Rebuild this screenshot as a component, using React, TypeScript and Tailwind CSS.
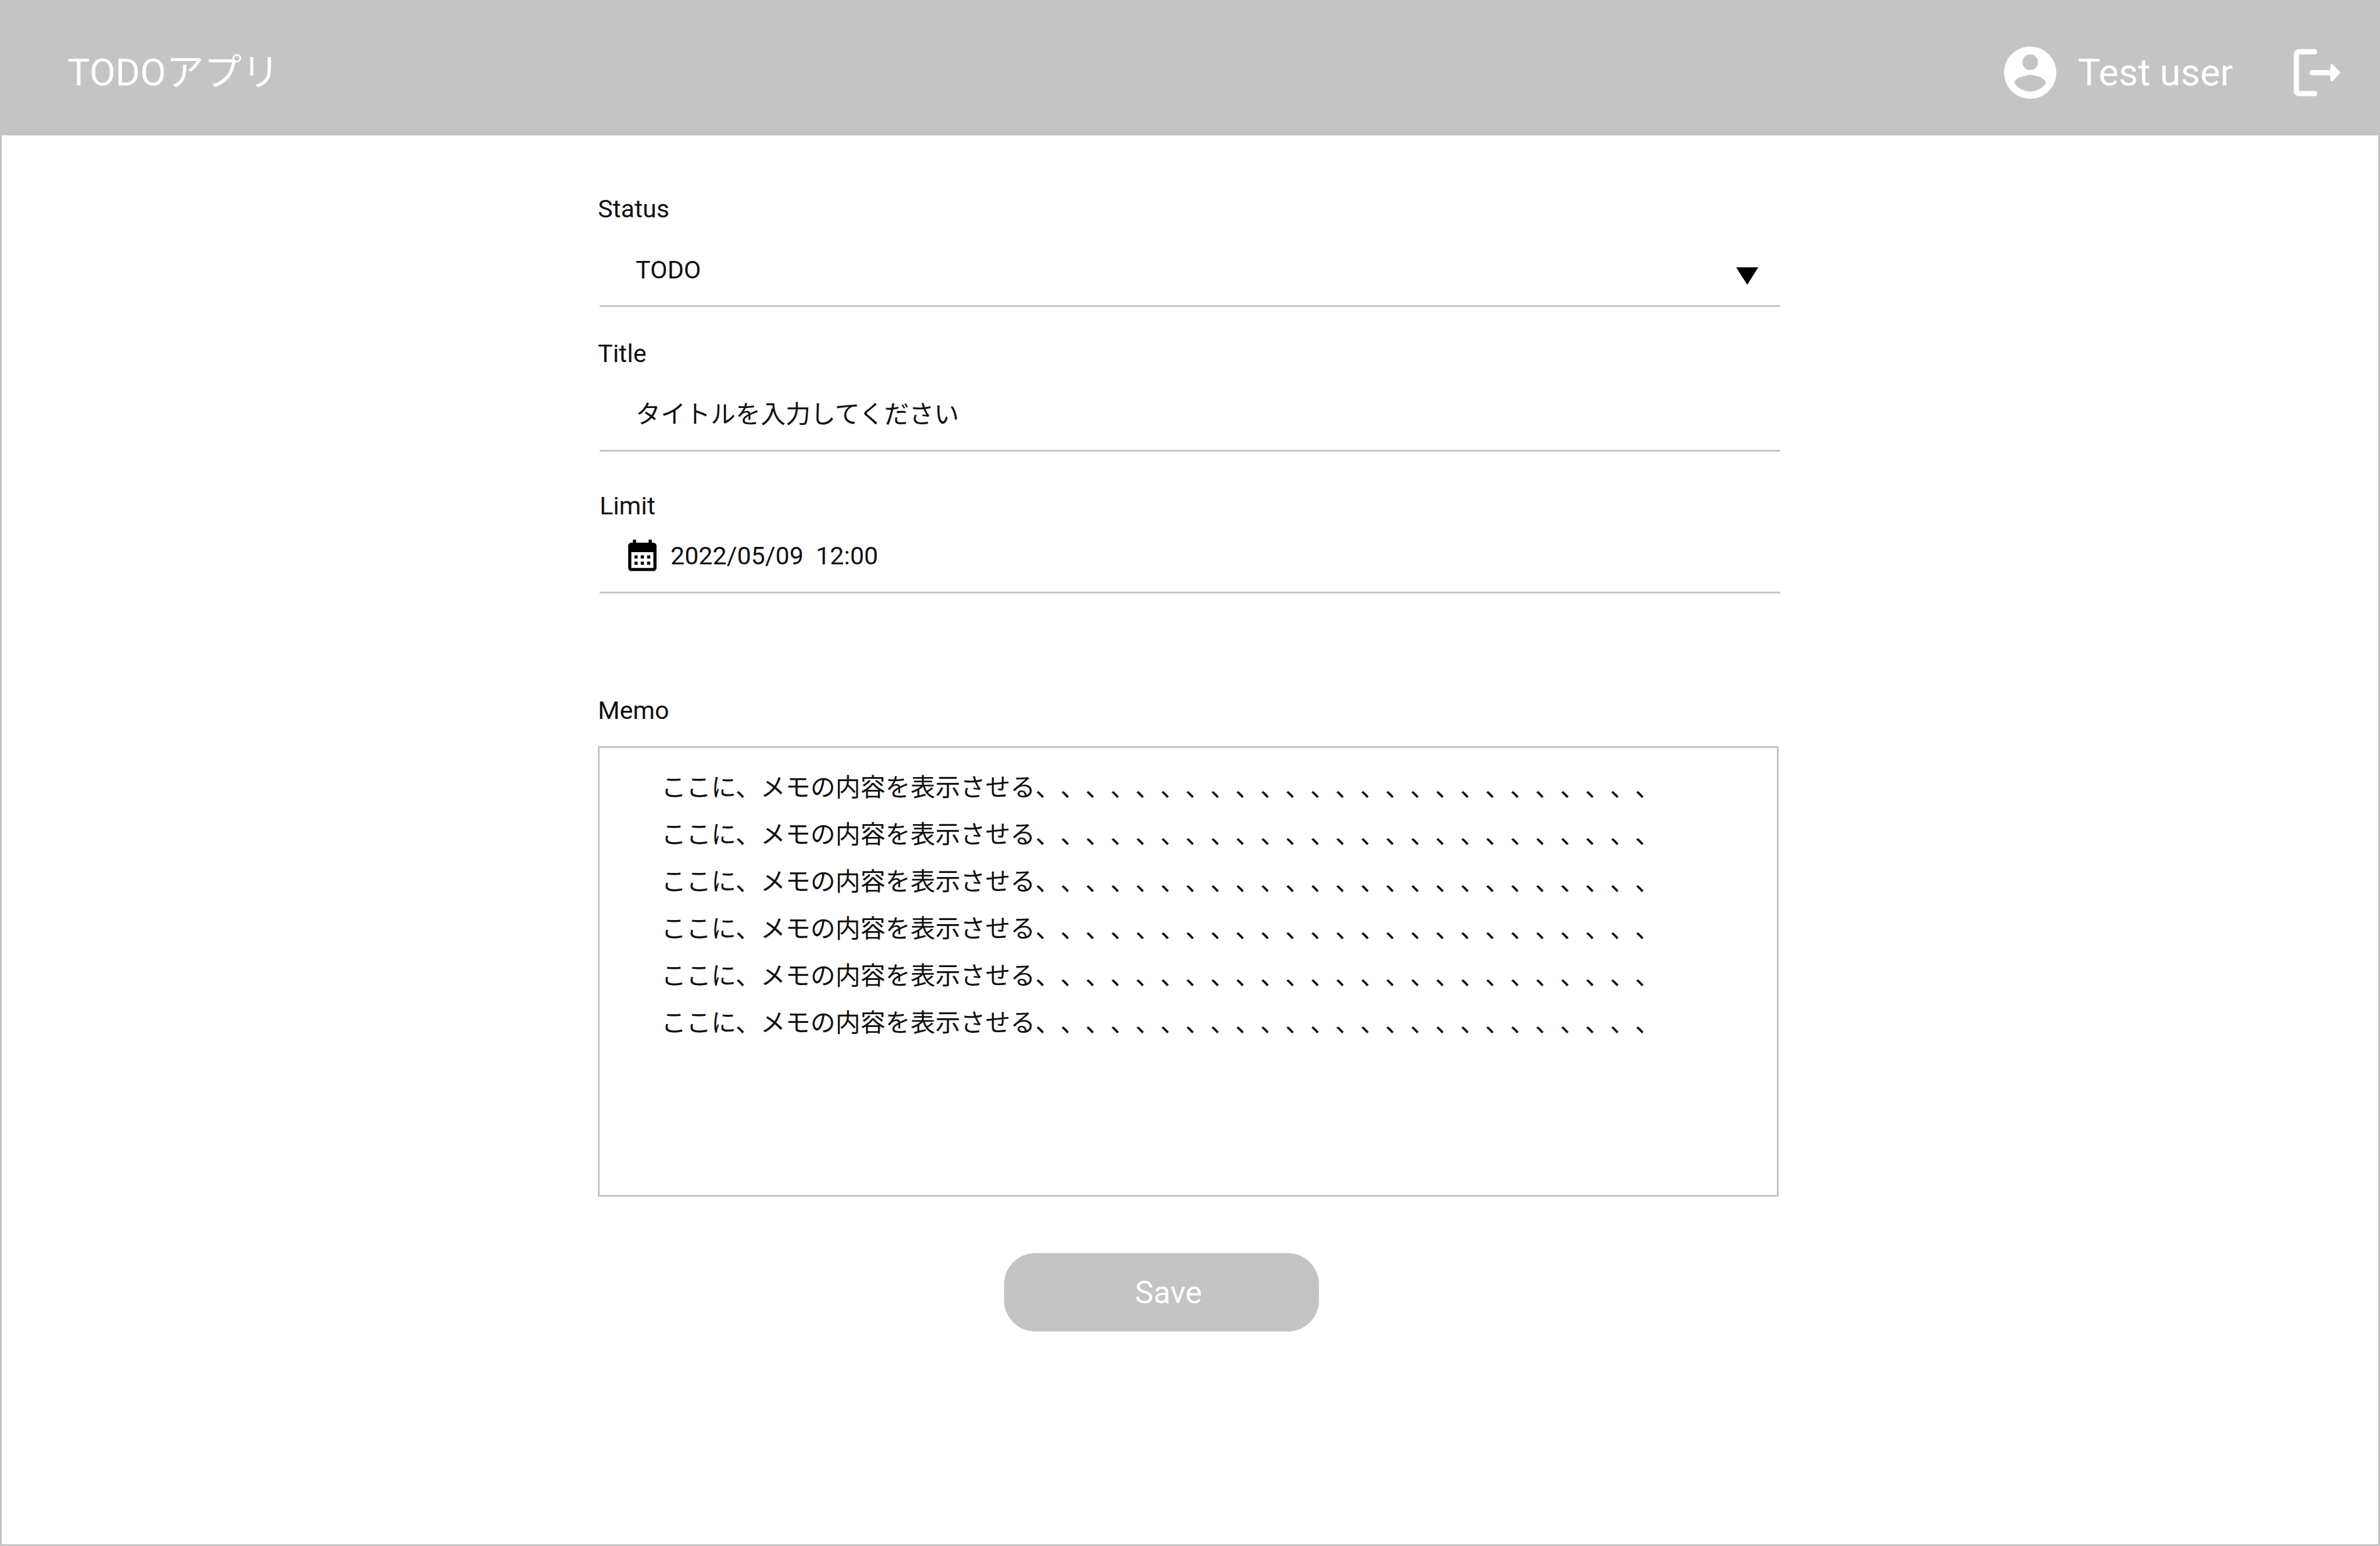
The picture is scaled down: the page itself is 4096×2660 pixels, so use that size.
import React from 'react';

const memoText = Array(6)
  .fill('ここに、メモの内容を表示させる' + '、'.repeat(25))
  .join('\n');

function AccountIcon() {
  return (
    <svg viewBox="0 0 24 24" className="size-[108px] shrink-0" fill="currentColor" aria-hidden="true">
      <path d="M12 2C6.48 2 2 6.48 2 12s4.48 10 10 10 10-4.48 10-10S17.52 2 12 2zm0 3c1.66 0 3 1.34 3 3s-1.34 3-3 3-3-1.34-3-3 1.34-3 3-3zm0 14.2c-2.5 0-4.71-1.28-6-3.22.03-1.99 4-3.08 6-3.08 1.99 0 5.97 1.09 6 3.08-1.29 1.94-3.5 3.22-6 3.22z" />
    </svg>
  );
}

function LogoutIcon() {
  return (
    <svg viewBox="0 0 24 24" className="size-[108px] shrink-0" fill="currentColor" aria-hidden="true">
      <path d="M5 5h6c.55 0 1-.45 1-1s-.45-1-1-1H5c-1.1 0-2 .9-2 2v14c0 1.1.9 2 2 2h6c.55 0 1-.45 1-1s-.45-1-1-1H5V5z" />
      <path d="M20.65 11.65l-2.79-2.79c-.32-.32-.86-.1-.86.35V11h-7c-.55 0-1 .45-1 1s.45 1 1 1h7v1.79c0 .45.54.67.85.35l2.79-2.79c.2-.19.2-.51.01-.7z" />
    </svg>
  );
}

function CalendarIcon() {
  return (
    <svg viewBox="0 0 24 24" className="size-[65px] shrink-0 text-black" fill="currentColor" aria-hidden="true">
      <path d="M19 4h-1V2h-2v2H8V2H6v2H5c-1.1 0-2 .9-2 2v14c0 1.1.9 2 2 2h14c1.1 0 2-.9 2-2V6c0-1.1-.9-2-2-2zm0 16H5V10h14v10zM9 14H7v-2h2v2zm4 0h-2v-2h2v2zm4 0h-2v-2h2v2zm-8 4H7v-2h2v2zm4 0h-2v-2h2v2zm4 0h-2v-2h2v2z" />
    </svg>
  );
}

export default function App() {
  return (
    <div className="flex min-h-screen flex-col border-[3px] border-[#c4c4c4] bg-white font-[Roboto,'Noto_Sans_CJK_JP',sans-serif] text-[43px] leading-[50px] text-[#111111]">
      <header className="flex h-[230px] items-center justify-between bg-[#c4c4c4] pt-[13px] pr-[51px] pl-[113px] text-[65px] leading-[76px] text-white">
        <h1>TODOアプリ</h1>
        <div className="flex items-center">
          <AccountIcon />
          <span className="ml-[28px]">Test user</span>
          <button type="button" aria-label="Log out" className="ml-[91px]">
            <LogoutIcon />
          </button>
        </div>
      </header>

      <form className="mx-auto flex w-full max-w-[2038px] flex-col pt-[101px]">
        <label htmlFor="status">Status</label>
        <div className="mx-[3px] mt-[21px] grid items-center border-b-[3px] border-[#c4c4c4]">
          <select
            id="status"
            className="col-start-1 row-start-1 h-[120px] w-full appearance-none bg-transparent px-[62px] pb-[2px] outline-none"
          >
            <option>TODO</option>
          </select>
          <svg
            viewBox="0 0 38 30"
            className="pointer-events-none col-start-1 row-start-1 mt-[20px] mr-[38px] h-[30px] w-[38px] justify-self-end fill-black"
            aria-hidden="true"
          >
            <path d="M0 0h38L19 30z" />
          </svg>
        </div>

        <label htmlFor="title" className="mt-[55px]">Title</label>
        <input
          id="title"
          type="text"
          placeholder="タイトルを入力してください"
          className="mx-[3px] mt-[21px] h-[123px] border-b-[3px] border-[#c4c4c4] px-[62px] pb-[2px] outline-none placeholder:text-[#111111]"
        />

        <label htmlFor="limit" className="mt-[68px] ml-[3px]">Limit</label>
        <div className="mx-[3px] flex h-[126px] items-center border-b-[3px] border-[#c4c4c4] pb-[2px] pl-[41px]">
          <CalendarIcon />
          <input
            id="limit"
            type="text"
            defaultValue="2022/05/09  12:00"
            className="ml-[16px] min-w-0 flex-1 outline-none"
          />
        </div>

        <label htmlFor="memo" className="mt-[176px]">Memo</label>
        <textarea
          id="memo"
          defaultValue={memoText}
          className="mt-[37px] mr-[6px] h-[775px] resize-none border-[3px] border-[#c4c4c4] px-[106px] pt-[28px] leading-[81px] outline-none [text-spacing-trim:space-all]"
        />

        <div className="mt-[97px] flex justify-center pr-[98px]">
          <button
            type="submit"
            className="h-[135px] w-[542px] rounded-[54px] bg-[#c4c4c4] pl-[24px] text-[54px] leading-[64px] text-white"
          >
            Save
          </button>
        </div>
      </form>
    </div>
  );
}
